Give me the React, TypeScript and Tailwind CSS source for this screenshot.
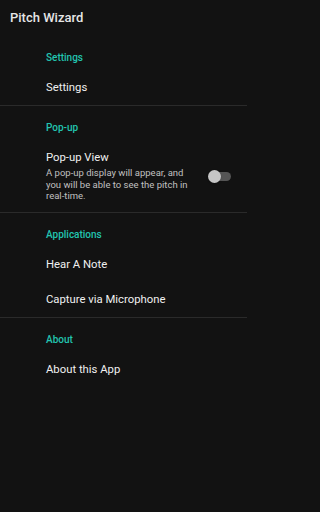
import React from 'react';

type Item = { title: string; summary?: string; toggle?: boolean };
type Section = { header: string; items: Item[] };

const sections: Section[] = [
    { header: 'Settings', items: [{ title: 'Settings' }] },
    {
        header: 'Pop-up',
        items: [
            {
                title: 'Pop-up View',
                summary: 'A pop-up display will appear, and you will be able to see the pitch in real-time.',
                toggle: true,
            },
        ],
    },
    { header: 'Applications', items: [{ title: 'Hear A Note' }, { title: 'Capture via Microphone' }] },
    { header: 'About', items: [{ title: 'About this App' }] },
];

function Toggle() {
    return (
        <div className="relative w-[23px] h-[14px] flex items-center shrink-0">
            <div className="absolute left-[3px] right-0 h-[9px] rounded-full bg-[#555555]" />
            <div className="relative w-[13px] h-[13px] rounded-full bg-[#c6c6c6] shadow-sm" />
        </div>
    );
}

export default function App() {
    return (
        <div className="w-full min-h-screen bg-[#121212]">
            <div
                className="w-[247px] h-[512px] bg-[#121212] overflow-hidden"
                style={{ fontFamily: 'Roboto, "Noto Sans", sans-serif' }}
            >
                <div className="h-[36px] flex items-center pl-[10px] text-[13px] font-medium text-[#e6e6e6]">
                    Pitch Wizard
                </div>

                {sections.map((section, i) => (
                    <div key={section.header} className={i < sections.length - 1 ? 'border-b border-[#2a2a2a]' : ''}>
                        <div className="pt-[16px] pb-[10px] pl-[46px] pr-[16px]">
                            <div className="text-[10px] leading-[12px] font-medium text-[#22c4b0]">{section.header}</div>
                            <div className="mt-[17px] flex flex-col gap-[21px]">
                                {section.items.map((item) => (
                                    <div key={item.title} className="flex items-center gap-[12px]">
                                        <div className="flex-1 min-w-0">
                                            <div className="text-[11.3px] leading-[14px] text-[#f0f0f0]">{item.title}</div>
                                            {item.summary && (
                                                <div className="mt-[2px] text-[9.5px] leading-[11.5px] text-[#c0c0c0]">
                                                    {item.summary}
                                                </div>
                                            )}
                                        </div>
                                        {item.toggle && <Toggle />}
                                    </div>
                                ))}
                            </div>
                        </div>
                    </div>
                ))}
            </div>
        </div>
    );
}
